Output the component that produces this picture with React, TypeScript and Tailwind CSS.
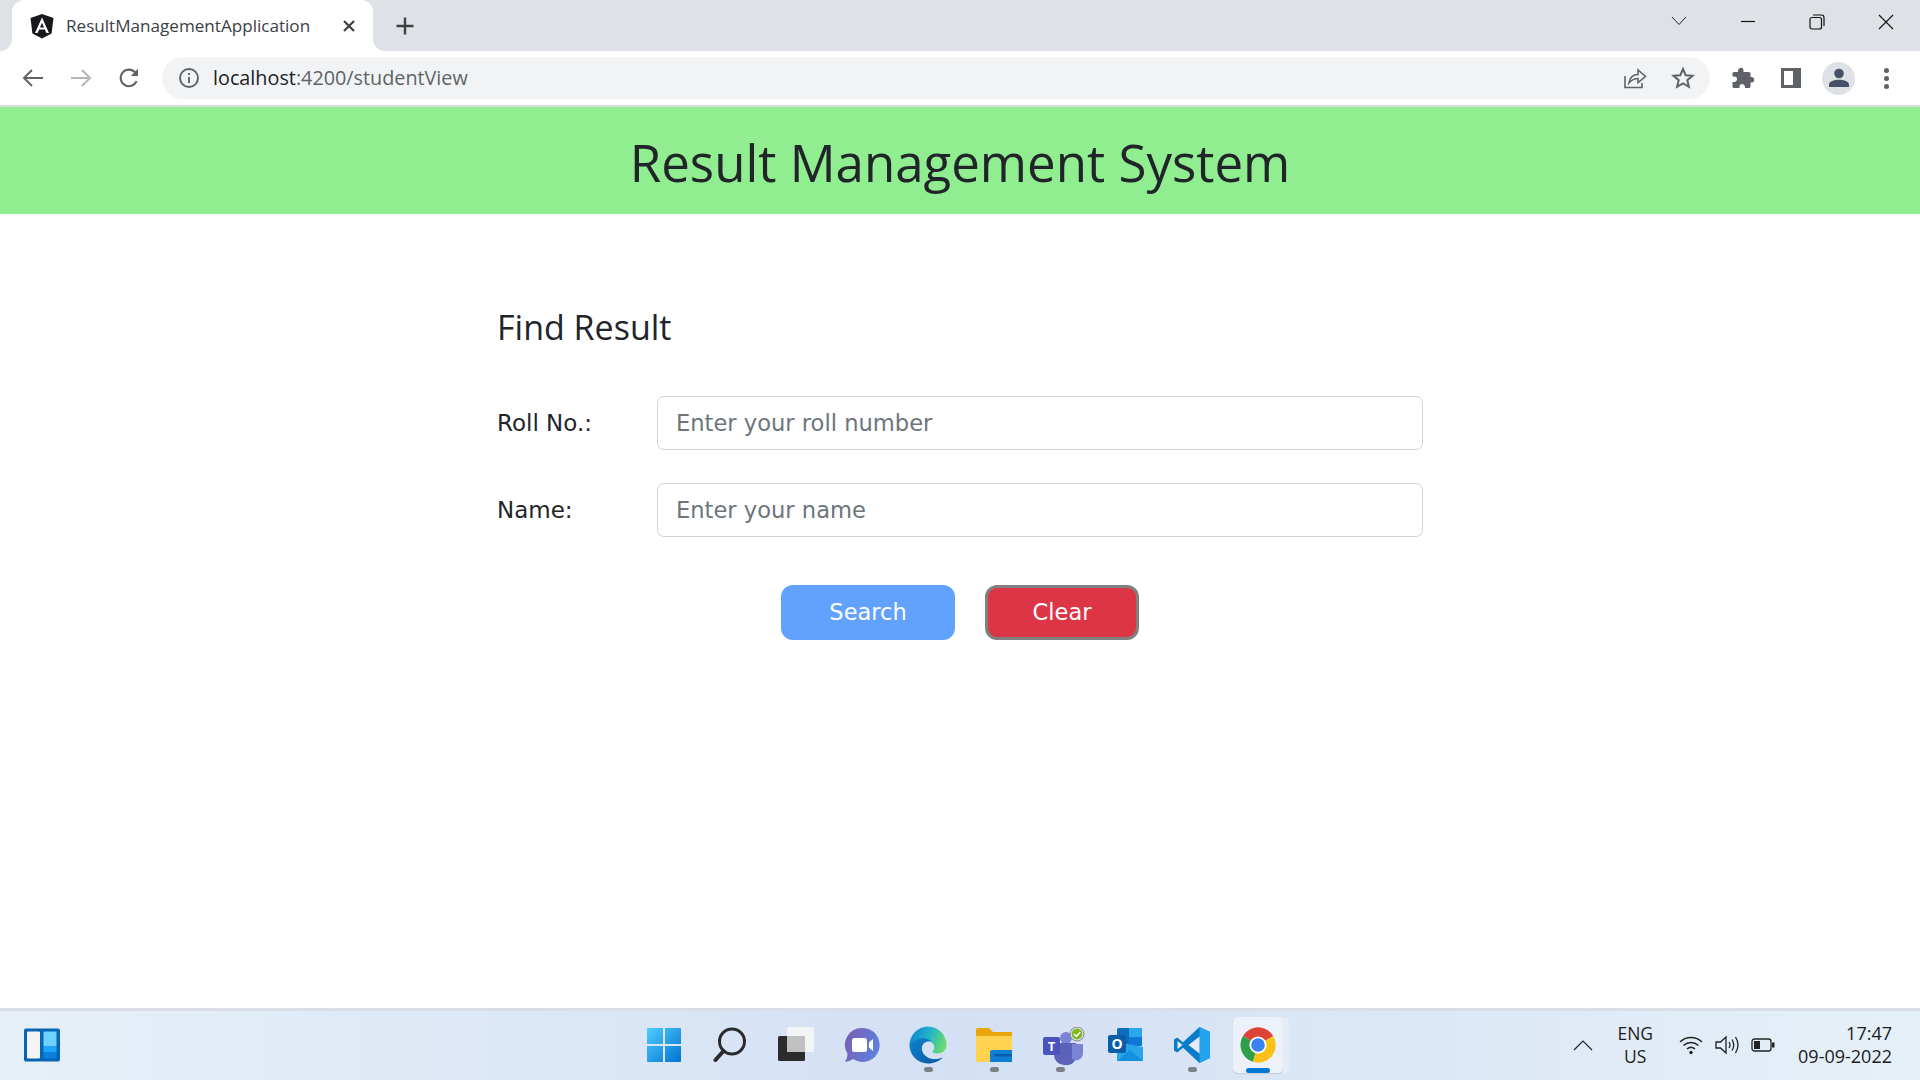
import React from "react";

const segoe = "font-['Open_Sans','Noto_Sans',sans-serif]";

function AngularLogo() {
  return (
    <svg width="26" height="26" viewBox="0 0 26 26">
      <path d="M13 1 L24.5 5 L22.6 20.4 L13 25.5 L3.4 20.4 L1.5 5 Z" fill="#16181d" />
      <path d="M13 4.5 L6 20 H8.7 L10.1 16.5 H15.9 L17.3 20 H20 Z M13 9.7 L15 14.4 H11 Z" fill="#fff" fillRule="evenodd" />
    </svg>
  );
}

function BrowserChrome() {
  return (
    <div className="shrink-0">
      {/* Tab strip */}
      <div className="flex h-[51px] items-end bg-[#dee1e6] pl-[12px]">
        <div className="relative flex h-[51px] w-[361px] items-center rounded-t-[12px] bg-white pl-[17px] pr-[17px]">
          <span className="absolute bottom-0 left-[-12px] h-[12px] w-[12px] bg-white">
            <span className="block h-full w-full rounded-br-[12px] bg-[#dee1e6]" />
          </span>
          <span className="absolute bottom-0 right-[-12px] h-[12px] w-[12px] bg-white">
            <span className="block h-full w-full rounded-bl-[12px] bg-[#dee1e6]" />
          </span>
          <AngularLogo />
          <span className={`ml-[11px] flex-1 text-[17.1px] leading-none text-[#3c4043] ${segoe}`}>ResultManagementApplication</span>
          <svg width="14" height="14" viewBox="0 0 14 14" stroke="#3c4043" strokeWidth="2.2">
            <path d="M2 2 L12 12 M12 2 L2 12" />
          </svg>
        </div>
        <div className="ml-[22px] flex h-[51px] items-center">
          <svg width="20" height="20" viewBox="0 0 20 20" stroke="#3c4043" strokeWidth="2.4">
            <path d="M10 1.5 V18.5 M1.5 10 H18.5" />
          </svg>
        </div>
        <div className="ml-auto flex h-[51px] items-start">
          <div className="flex w-[69px] justify-center pt-[14px]">
            <svg width="16" height="14" viewBox="0 0 16 14" fill="none" stroke="#202124" strokeWidth="1">
              <path d="M1 3 L8 10.5 L15 3" />
            </svg>
          </div>
          <div className="flex w-[69px] justify-center pt-[14px]">
            <svg width="16" height="14" viewBox="0 0 16 14" fill="none" stroke="#111" strokeWidth="1.2">
              <path d="M1 7.5 H15" />
            </svg>
          </div>
          <div className="flex w-[69px] justify-center pt-[14px]">
            <svg width="16" height="16" viewBox="0 0 16 16" fill="none" stroke="#111" strokeWidth="1.2">
              <rect x="1" y="3.5" width="11.5" height="11.5" rx="2" />
              <path d="M4 1 H12.5 Q15 1 15 3.5 V12" />
            </svg>
          </div>
          <div className="flex w-[69px] justify-center pt-[14px]">
            <svg width="16" height="16" viewBox="0 0 16 16" stroke="#111" strokeWidth="1.1">
              <path d="M1 1 L15 15 M15 1 L1 15" />
            </svg>
          </div>
        </div>
      </div>

      {/* Toolbar */}
      <div className="flex h-[56px] items-center border-b-2 border-[#dadce0] bg-white pl-[21px] pr-[29px]">
        <svg width="24" height="24" viewBox="0 0 24 24" fill="none" stroke="#5f6368" strokeWidth="2">
          <path d="M22 12 H3 M11 4 L3 12 L11 20" />
        </svg>
        <svg className="ml-[24px]" width="24" height="24" viewBox="0 0 24 24" fill="none" stroke="#b4b6b9" strokeWidth="2">
          <path d="M2 12 H21 M13 4 L21 12 L13 20" />
        </svg>
        <svg className="ml-[24px]" width="24" height="24" viewBox="0 0 24 24" fill="none" stroke="#5f6368" strokeWidth="2.1">
          <path d="M19.6 15.2 A8.3 8.3 0 1 1 18.4 6.6" />
          <path d="M21 2.8 V10 H13.8 Z" fill="#5f6368" stroke="none" />
        </svg>
        <div className="ml-[21px] flex h-[42px] flex-1 items-center rounded-full bg-[#f1f3f4] pl-[16px] pr-[15px]">
          <svg width="22" height="22" viewBox="0 0 22 22" fill="none" stroke="#5f6368" strokeWidth="1.9">
            <circle cx="11" cy="11" r="9" />
            <path d="M11 10 V16 M11 6 V8" />
          </svg>
          <span className={`ml-[13px] flex-1 text-[19.8px] leading-none text-[#5f6368] ${segoe}`}>
            <span className="text-[#202124]">localhost</span>:4200/studentView
          </span>
          <svg width="24" height="24" viewBox="0 0 24 24" fill="none" stroke="#5f6368" strokeWidth="1.6">
            <path d="M2 10 V21.5 H19 V17" />
            <path d="M6 17 C7 11 11 8.5 15 8.5 V4 L22.5 10.5 L15 16.5 V12.5 C11.5 12.5 8.5 14 6 17 Z" />
          </svg>
          <svg className="ml-[24px]" width="24" height="24" viewBox="0 0 24 24" fill="none" stroke="#5f6368" strokeWidth="2">
            <path d="M12 3 L14.7 9.2 L21.5 9.8 L16.3 14.2 L17.9 20.8 L12 17.3 L6.1 20.8 L7.7 14.2 L2.5 9.8 L9.3 9.2 Z" />
          </svg>
        </div>
        <svg className="ml-[21px]" width="24" height="24" viewBox="0 0 24 24" fill="#5f6368">
          <path d="M9 2 Q12 1 12.5 4 V6 H18 A1.5 1.5 0 0 1 19.5 7.5 V11 H21 Q24 12 23 15 Q22.5 16.5 20.5 16.5 H19.5 V20.5 A1.5 1.5 0 0 1 18 22 H14 V20.5 Q13.5 18 11 18 Q8.5 18 8.5 20.5 V22 H3 A1.5 1.5 0 0 1 1.5 20.5 V16 H3 Q6 15.5 6 13 Q6 10.5 3 10.5 H1.5 V7.5 A1.5 1.5 0 0 1 3 6 H7 V4.5 Q7 2.8 9 2 Z" />
        </svg>
        <svg className="ml-[24px]" width="24" height="24" viewBox="0 0 24 24">
          <path fillRule="evenodd" fill="#5f6368" d="M2 2 H22 V22 H2 Z M5 5 V19 H14 V5 Z" />
        </svg>
        <div className="ml-[19px] flex h-[33px] w-[33px] items-center justify-center rounded-full bg-[#dee1e6]">
          <svg width="22" height="22" viewBox="0 0 22 22" fill="#475066">
            <circle cx="11" cy="6.5" r="4.8" />
            <path d="M1 20 V17.5 C1 14.5 6 12.8 11 12.8 C16 12.8 21 14.5 21 17.5 V20 Z" />
          </svg>
        </div>
        <div className="ml-[26px] flex w-[10px] flex-col items-center gap-[3px]">
          <span className="h-[5px] w-[5px] rounded-full bg-[#5f6368]" />
          <span className="h-[5px] w-[5px] rounded-full bg-[#5f6368]" />
          <span className="h-[5px] w-[5px] rounded-full bg-[#5f6368]" />
        </div>
      </div>
    </div>
  );
}

function FormRow({ label, placeholder }: { label: string; placeholder: string }) {
  return (
    <div className="flex items-center">
      <label className="w-[160px] text-[23px] text-[#212529]">{label}</label>
      <input
        placeholder={placeholder}
        className="h-[54px] flex-1 rounded-[7px] border border-[#ced4da] bg-white px-[18px] text-[22.6px] placeholder:text-[#6c757d]"
      />
    </div>
  );
}

function StudentView() {
  return (
    <main className="flex-1 bg-white font-['DejaVu_Sans',sans-serif]">
      <div className="flex h-[107px] justify-center bg-[#90ee90]">
        <h1 className={`pt-[15px] text-[51px] leading-[80px] text-[#212529] ${segoe}`}>Result Management System</h1>
      </div>
      <div className="mx-auto w-[926px] pt-[84px]">
        <h2 className={`text-[34px] leading-[58px] text-[#212529] ${segoe}`}>Find Result</h2>
        <div className="mt-[40px] flex flex-col gap-[33px]">
          <FormRow label="Roll No.:" placeholder="Enter your roll number" />
          <FormRow label="Name:" placeholder="Enter your name" />
        </div>
        <div className="mt-[48px] flex items-start gap-[30px] pl-[284px]">
          <button className="h-[55px] w-[174px] rounded-[12px] bg-[#62a2ff] text-[22.5px] text-white">Search</button>
          <button className="h-[55px] w-[154px] rounded-[12px] border-[3px] border-[#808080] bg-[#dc3545] text-[22.5px] text-white">Clear</button>
        </div>
      </div>
    </main>
  );
}

function TaskIcon({ children, dot, active }: { children: React.ReactNode; dot?: boolean; active?: boolean }) {
  return (
    <div className="relative flex h-[60px] w-[66px] items-center justify-center">
      {active && (
        <>
          <span className="absolute right-[1px] top-[2px] h-[56px] w-[16px] rounded-[5px] border-r-2 border-[#e1e8f5] bg-[#e6ecf7]" />
          <span className="absolute left-[8px] top-[2px] h-[56px] w-[50px] rounded-[5px] bg-[#edf1fa] shadow-[0_1px_1px_#c5cede]" />
        </>
      )}
      <div className="relative">{children}</div>
      {dot && <span className="absolute bottom-[3px] h-[5px] w-[9px] rounded-full bg-[#7c8087]" />}
      {active && <span className="absolute bottom-[2px] h-[5px] w-[24px] rounded-full bg-[#0078d4]" />}
    </div>
  );
}

function Taskbar() {
  return (
    <div className="grid h-[72px] shrink-0 grid-cols-[1fr_auto_1fr] items-center border-t-[3px] border-[#d8dde6] bg-gradient-to-r from-[#e7f0f8] via-[#d4e0f4] to-[#e6f0f8] pb-[2px]">
      <div className="pl-[24px]">
        <svg width="36" height="34" viewBox="0 0 36 34">
          <rect width="36" height="33" y="0.5" rx="2" fill="#0765b4" />
          <rect x="3" y="3.5" width="13" height="27" rx="1" fill="#f4f4f4" />
          <rect x="19.5" y="3.5" width="13" height="15" fill="#6ed2ff" />
          <rect x="19.5" y="18.5" width="13" height="6" fill="#1fa5f5" />
          <rect x="19.5" y="24.5" width="13" height="6" fill="#0a80df" />
        </svg>
      </div>

      <div className="ml-[2px] flex items-center">
        <TaskIcon>
          <svg width="36" height="36" viewBox="0 0 36 36">
            <defs>
              <linearGradient id="win" x1="0" y1="0" x2="1" y2="1">
                <stop offset="0" stopColor="#4fcdfd" />
                <stop offset="1" stopColor="#0272d2" />
              </linearGradient>
            </defs>
            <path fill="url(#win)" d="M1 2 Q1 1 2 1 H17 V17 H1 Z M19 1 H34 Q35 1 35 2 V17 H19 Z M1 19 H17 V35 H2 Q1 35 1 34 Z M19 19 H35 V34 Q35 35 34 35 H19 Z" />
          </svg>
        </TaskIcon>
        <TaskIcon>
          <svg width="34" height="36" viewBox="0 0 34 36" fill="none" stroke="#2b2b2b">
            <circle cx="19" cy="14.5" r="12.5" strokeWidth="3" />
            <path d="M10.5 24 L2.5 33" strokeWidth="4" strokeLinecap="round" />
          </svg>
        </TaskIcon>
        <TaskIcon>
          <svg width="36" height="36" viewBox="0 0 36 36">
            <rect x="0" y="9" width="27" height="25" rx="1.5" fill="#2c2c2c" />
            <rect x="9" y="0" width="27" height="25" rx="1.5" fill="#f4f4f4" fillOpacity="0.95" />
            <rect x="9" y="9" width="18" height="16" fill="#c0c0c0" />
          </svg>
        </TaskIcon>
        <TaskIcon>
          <svg width="36" height="36" viewBox="0 0 36 36">
            <defs>
              <linearGradient id="chat" x1="0" y1="0" x2="1" y2="0.4">
                <stop offset="0" stopColor="#7d5cb0" />
                <stop offset="1" stopColor="#5f7fdc" />
              </linearGradient>
            </defs>
            <path fill="url(#chat)" d="M18 1 A17 17 0 1 1 9 32 Q5 35 1 35 Q3.5 31 3.5 27 A17 17 0 0 1 18 1 Z" />
            <rect x="8" y="11" width="15" height="14" rx="2.5" fill="#fff" />
            <path d="M25 15.5 L29 12 V24 L25 20.5 Z" fill="#fff" />
          </svg>
        </TaskIcon>
        <TaskIcon dot>
          <svg width="38" height="38" viewBox="0 0 38 38">
            <defs>
              <linearGradient id="edge" x1="0" y1="0.3" x2="1" y2="0.6">
                <stop offset="0" stopColor="#0c86d2" />
                <stop offset="0.5" stopColor="#23b5c8" />
                <stop offset="1" stopColor="#6fdc68" />
              </linearGradient>
              <linearGradient id="edgeLow" x1="0" y1="0" x2="1" y2="1">
                <stop offset="0" stopColor="#0f83d0" />
                <stop offset="1" stopColor="#0b569f" />
              </linearGradient>
            </defs>
            <path fill="url(#edge)" d="M19 0.5 C29.5 0.5 37.5 9 37.5 19 C37.5 24.5 33.5 27.5 28.5 27.5 C25.5 27.5 23 26.5 23.5 25.5 C25.5 23.5 26 21 24.5 18.5 C22 14.5 16 14 12 17 C8 20 1 22 0.5 19 C0.5 9 9 0.5 19 0.5 Z" />
            <path fill="url(#edgeLow)" d="M0.5 19 C5 12 17 10 22.5 15.5 C16 14 12 19 13 24 C14 30 21 34 28 33 C30.5 32.7 32.5 32 34 31 C31 35 25 37.5 19 37.5 C8.5 37.5 0.5 29 0.5 19 Z" />
          </svg>
        </TaskIcon>
        <TaskIcon dot>
          <svg width="36" height="34" viewBox="0 0 36 34">
            <path d="M0 2 Q0 0 2 0 H13 L17 4 H36 V32 Q36 34 34 34 H2 Q0 34 0 32 Z" fill="#e9a60b" />
            <path d="M0 8 H36 V32 Q36 34 34 34 H2 Q0 34 0 32 Z" fill="#ffd34f" />
            <path d="M14 24 Q14 22 16 22 H36 V34 H14 Z" fill="#0f7fd4" />
            <rect x="18" y="26" width="18" height="2.5" fill="#0a5ea8" />
          </svg>
        </TaskIcon>
        <TaskIcon dot>
          <svg className="ml-[8px] mt-[4px]" width="44" height="40" viewBox="0 0 44 40">
            <circle cx="24" cy="11" r="6" fill="#7b83d4" />
            <path d="M12 16 H34 V30 A9 9 0 0 1 26 38 H22 A10 10 0 0 1 12 28 Z" fill="#5b62b8" />
            <path d="M30 17 H41 V27 A7 7 0 0 1 30 32 Z" fill="#7b83d4" />
            <rect x="1" y="10" width="17" height="18" rx="2" fill="#4b53bc" />
            <text x="9.5" y="24" textAnchor="middle" fontSize="13" fontWeight="700" fill="#fff" fontFamily="'Open Sans',sans-serif">T</text>
            <circle cx="35" cy="7" r="7" fill="#dfe3ea" stroke="#7d8288" strokeWidth="1" />
            <circle cx="35" cy="7" r="5.4" fill="#7fb61b" />
            <path d="M32 7 L34.4 9.4 L38.2 5" fill="none" stroke="#fff" strokeWidth="1.5" />
          </svg>
        </TaskIcon>
        <TaskIcon>
          <svg width="36" height="34" viewBox="0 0 36 34">
            <rect x="9" y="0" width="25" height="18" rx="1.5" fill="#0f6cbd" />
            <rect x="21" y="0" width="13" height="9" fill="#28a8ea" />
            <rect x="21" y="9" width="13" height="9" fill="#0f78d4" />
            <path d="M9 14 L35 19 V32 Q35 33 34 33 H10 Q9 33 9 32 Z" fill="#2aa4ea" />
            <path d="M9 33 L22 22 L35 33 Z" fill="#1490df" />
            <rect x="0" y="7" width="18" height="18" rx="2" fill="#0a5ea8" />
            <text x="9" y="21" textAnchor="middle" fontSize="14" fontWeight="700" fill="#fff" fontFamily="'Open Sans',sans-serif">O</text>
          </svg>
        </TaskIcon>
        <TaskIcon dot>
          <svg width="36" height="36" viewBox="0 0 36 36">
            <path d="M25.5 0 L36 5 V31 L25.5 36 L9 20.8 L3.2 25.5 L0 23.5 V12.5 L3.2 10.5 L9 15.2 Z" fill="#0a7cc8" />
            <path d="M25.5 0 L36 5 V31 L25.5 36 Z" fill="#24a4ee" />
            <path d="M25.5 9.5 V26.5 L14.5 18 Z" fill="#e6edf8" />
            <path d="M3.5 14 L8.5 18 L3.5 22 Z" fill="#e6edf8" />
          </svg>
        </TaskIcon>
        <TaskIcon active>
          <svg width="36" height="36" viewBox="0 0 36 36">
            <path d="M18 18 L3 9 A17.5 17.5 0 0 1 33.2 9 Z" fill="#dd4436" />
            <path d="M18 18 L3 9 A17.5 17.5 0 0 0 13 34.8 Z" fill="#2e9e4b" />
            <path d="M18 18 L33.2 9 A17.5 17.5 0 0 1 13 34.8 Z" fill="#fbc116" />
            <circle cx="18" cy="18" r="8.6" fill="#fff" />
            <circle cx="18" cy="18" r="6.8" fill="#3b82f0" />
          </svg>
        </TaskIcon>
      </div>

      {/* System tray */}
      <div className={`flex items-center justify-end pr-[28px] text-[17.5px] leading-[23px] text-[#1c1c1c] ${segoe}`}>
        <svg width="20" height="12" viewBox="0 0 20 12" fill="none" stroke="#222" strokeWidth="1.2">
          <path d="M1 11 L10 2 L19 11" />
        </svg>
        <div className="ml-[24px] flex flex-col items-center">
          <span>ENG</span>
          <span>US</span>
        </div>
        <svg className="ml-[26px]" width="24" height="20" viewBox="0 0 24 20" fill="none" stroke="#222" strokeWidth="1.5">
          <path d="M1 7 C7 1 17 1 23 7 M4.5 10.5 C9 6.5 15 6.5 19.5 10.5 M8 14 C10.5 11.8 13.5 11.8 16 14" />
          <circle cx="12" cy="17.5" r="1.7" fill="#222" stroke="none" />
        </svg>
        <svg className="ml-[12px]" width="26" height="22" viewBox="0 0 26 22" fill="none" stroke="#222" strokeWidth="1.3">
          <path d="M1 8 H5.5 L11 3 V19 L5.5 14 H1 Z" />
          <path d="M14 8 Q16 11 14 14 M17 5.5 Q20.5 11 17 16.5 M20.5 3 Q25.5 11 20.5 19" />
        </svg>
        <svg className="ml-[10px]" width="24" height="14" viewBox="0 0 24 14" fill="none">
          <rect x="1" y="1" width="19" height="12" rx="2.5" stroke="#222" strokeWidth="1.3" />
          <rect x="3" y="3" width="6" height="8" fill="#222" />
          <rect x="21" y="4.5" width="2.5" height="5" fill="#222" />
        </svg>
        <div className="ml-[23px] flex flex-col items-end text-[18px]">
          <span>17:47</span>
          <span>09-09-2022</span>
        </div>
      </div>
    </div>
  );
}

export default function App() {
  return (
    <div className="flex h-[1080px] w-[1920px] flex-col overflow-hidden">
      <BrowserChrome />
      <StudentView />
      <Taskbar />
    </div>
  );
}
